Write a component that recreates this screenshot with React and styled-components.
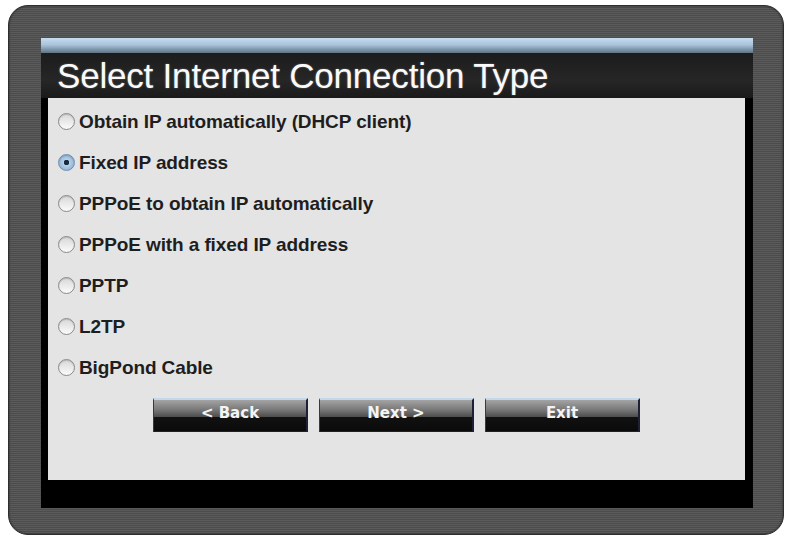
import React, { useState } from 'react'
import styled, { createGlobalStyle } from 'styled-components'

const GlobalStyle = createGlobalStyle`
  html, body {
    margin: 0;
    padding: 0;
    background: #fff;
  }
  body {
    font-family: "Liberation Sans", Arial, sans-serif;
  }
`

const OPTIONS = [
    'Obtain IP automatically (DHCP client)',
    'Fixed IP address',
    'PPPoE to obtain IP automatically',
    'PPPoE with a fixed IP address',
    'PPTP',
    'L2TP',
    'BigPond Cable',
]

function App() {
    const [selected, setSelected] = useState(1)

    return (
        <>
            <GlobalStyle />
            <Frame>
                <Panel>
                    <TopStrip />
                    <TitleBar>Select Internet Connection Type</TitleBar>
                    <Content>
                        <OptionList>
                            {OPTIONS.map((label, i) => (
                                <OptionRow key={label} onClick={() => setSelected(i)}>
                                    <Radio checked={selected === i} />
                                    <OptionLabel>{label}</OptionLabel>
                                </OptionRow>
                            ))}
                        </OptionList>
                        <ButtonRow>
                            <WizardButton>&lt; Back</WizardButton>
                            <WizardButton>Next &gt;</WizardButton>
                            <WizardButton>Exit</WizardButton>
                        </ButtonRow>
                    </Content>
                    <BottomBar />
                </Panel>
            </Frame>
        </>
    )
}

const Frame = styled.div`
  box-sizing: border-box;
  width: 776px;
  height: 530px;
  margin: 5px 0 0 8px;
  padding: 32px 30px 26px 32px;
  border-radius: 20px;
  border: 1px solid #2e2e2e;
  background-color: #525252;
  background-image: repeating-linear-gradient(
    to bottom,
    rgba(255, 255, 255, 0.05) 0px,
    rgba(255, 255, 255, 0.05) 1px,
    rgba(0, 0, 0, 0.08) 1px,
    rgba(0, 0, 0, 0.08) 2px
  );
  box-shadow: inset 0 0 2px rgba(0, 0, 0, 0.6);
`

const Panel = styled.div`
  display: flex;
  flex-direction: column;
  height: 100%;
  background: #000;
`

const TopStrip = styled.div`
  height: 15px;
  background: linear-gradient(to bottom, #c6dcee 0%, #a9c4dc 45%, #5f7384 100%);
`

const TitleBar = styled.div`
  height: 45px;
  display: flex;
  align-items: center;
  padding-left: 16px;
  background: linear-gradient(to bottom, #1c1c1c, #262626 60%, #1a1a1a);
  color: #fafafa;
  font-family: "Liberation Sans", Arial, sans-serif;
  font-size: 35px;
  letter-spacing: -0.2px;
  text-shadow: 0 0 2px rgba(255, 255, 255, 0.35);
`

const Content = styled.div`
  height: 382px;
  margin: 0 8px 0 7px;
  padding-top: 3px;
  box-sizing: border-box;
  background: #e4e4e4;
  display: flex;
  flex-direction: column;
`

const OptionList = styled.div`
  display: flex;
  flex-direction: column;
  padding-left: 10px;
`

const OptionRow = styled.label`
  height: 41px;
  display: flex;
  align-items: center;
  gap: 4px;
  cursor: pointer;
`

const Radio = styled.span`
  box-sizing: border-box;
  width: 17px;
  height: 17px;
  border-radius: 50%;
  border: 1.5px solid ${(p) => (p.checked ? '#6e8fae' : '#8a8a8a')};
  background: ${(p) =>
        p.checked
            ? 'radial-gradient(circle at 50% 50%, #1d2c3c 0 2.5px, #b6d1ea 3px, #7ea6cc 100%)'
            : 'linear-gradient(to bottom, #d8d8d8, #fbfbfb)'};
  box-shadow: inset 0 1px 1px rgba(0, 0, 0, 0.15);
  flex-shrink: 0;
`

const OptionLabel = styled.span`
  font-family: "Liberation Sans", Arial, sans-serif;
  font-weight: bold;
  font-size: 19px;
  letter-spacing: -0.1px;
  color: #1e1e1e;
`

const ButtonRow = styled.div`
  display: flex;
  justify-content: center;
  gap: 11px;
  margin-top: 10px;
`

const WizardButton = styled.button`
  box-sizing: border-box;
  width: 155px;
  height: 34px;
  padding: 0 0 6px;
  border: none;
  border-top: 2px solid #c4d8ec;
  border-right: 2px solid #1c2233;
  border-left: 1px solid #3a3a3a;
  border-bottom: 1px solid #1c2233;
  background: linear-gradient(
    to bottom,
    #a4a4a4 0%,
    #7a7a7a 30%,
    #4c4c4c 55%,
    #111 56%,
    #0a0a0a 100%
  );
  color: #f4f4f4;
  font-family: "DejaVu Sans", Verdana, sans-serif;
  font-weight: bold;
  font-size: 15px;
  cursor: pointer;
`

const BottomBar = styled.div`
  flex: 1;
  background: #000;
`

export default App
